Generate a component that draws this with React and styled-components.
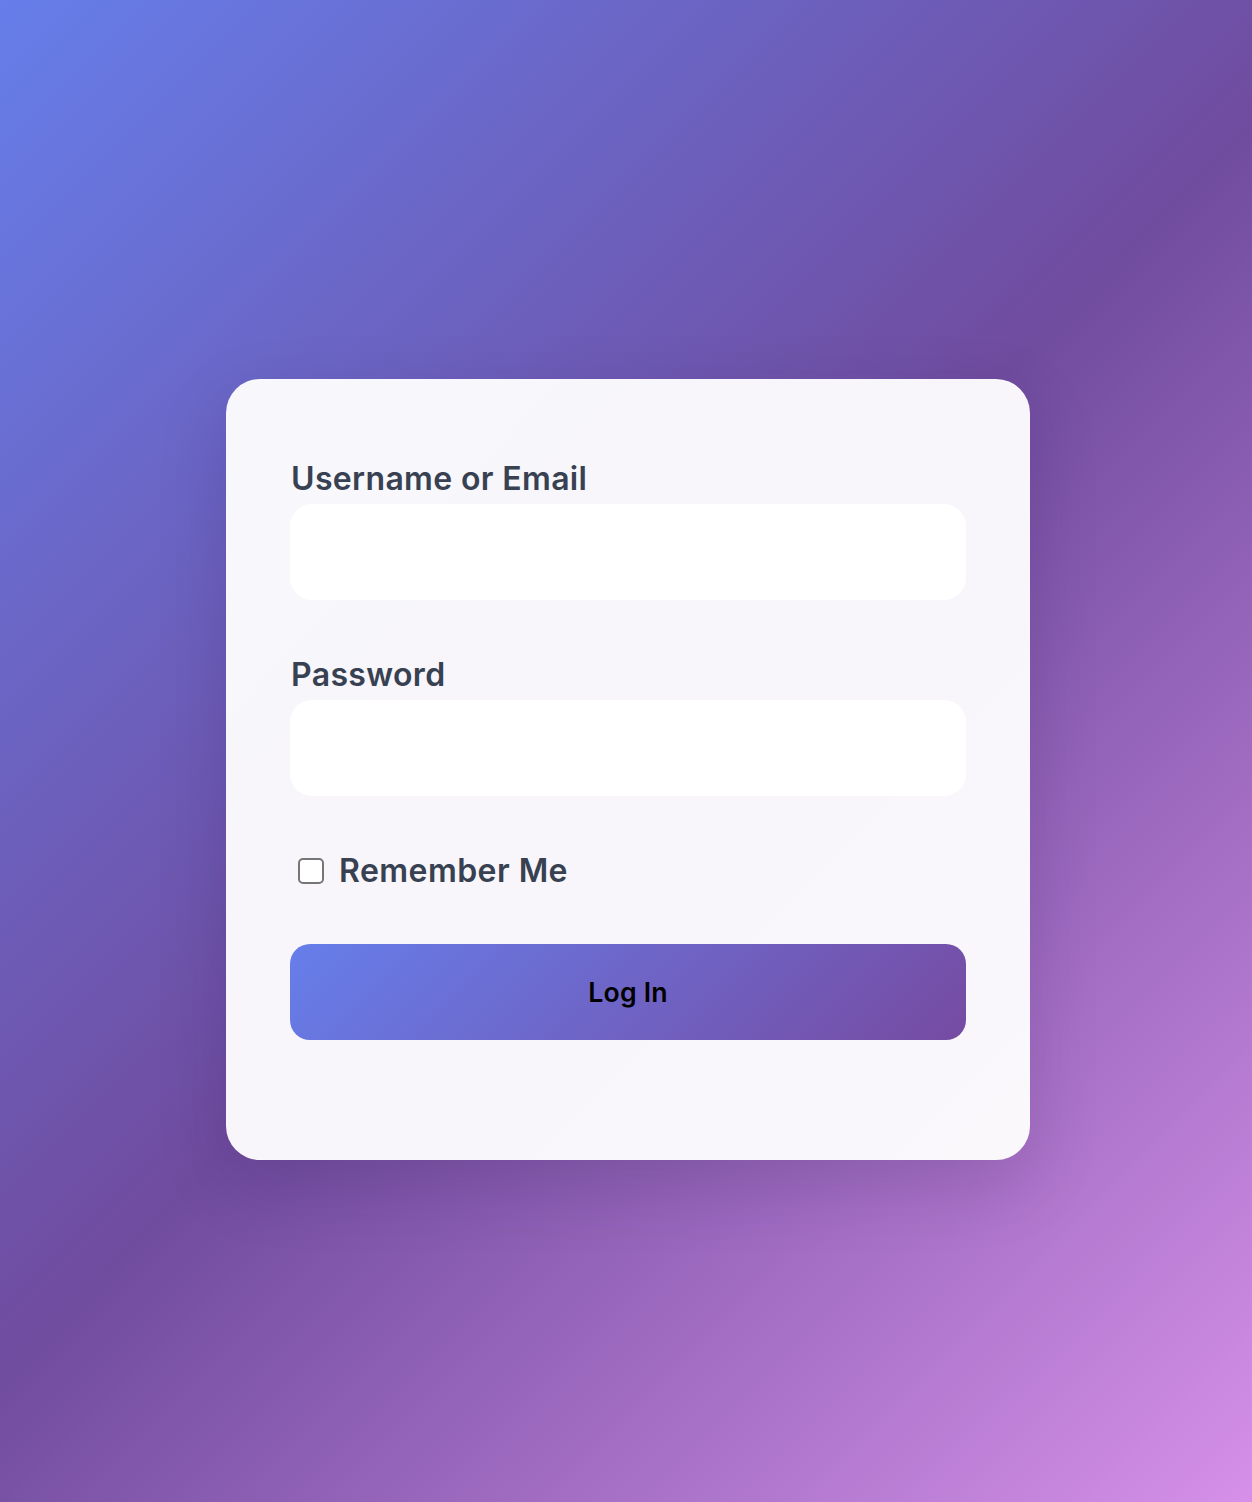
import React from "react";
import styled, { createGlobalStyle } from "styled-components";

const GlobalStyle = createGlobalStyle`
  * {
    box-sizing: border-box;
  }

  html,
  body {
    margin: 0;
    padding: 0;
  }

  body {
    font-family: Inter, "Noto Sans", "Liberation Sans", sans-serif;
  }
`;

function App() {
  return (
    <>
      <GlobalStyle />
      <StPage>
        <StCard>
          <StForm onSubmit={(e) => e.preventDefault()}>
            <StGroup>
              <StLabel htmlFor="user">Username or Email</StLabel>
              <StInput id="user" type="text" />
            </StGroup>

            <StGroup>
              <StLabel htmlFor="pass">Password</StLabel>
              <StInput id="pass" type="password" />
            </StGroup>

            <StRemember>
              <StCheck type="checkbox" />
              Remember Me
            </StRemember>

            <StButton type="submit">Log In</StButton>
          </StForm>
        </StCard>
      </StPage>
    </>
  );
}

export default App;

const StPage = styled.div`
  min-height: 100vh;
  padding: 37px 0 0 4px;
  display: flex;
  align-items: center;
  justify-content: center;
  background: linear-gradient(135deg, #667eea 0%, #704c9f 50%, #d690e9 100%);
`;

const StCard = styled.div`
  width: 804px;
  padding: 80px 64px 120px;
  border-radius: 34px;
  background: rgba(255, 255, 255, 0.95);
  box-shadow: 0 24px 70px rgba(30, 10, 60, 0.16);
`;

const StForm = styled.form`
  display: flex;
  flex-direction: column;
`;

const StGroup = styled.div`
  display: flex;
  flex-direction: column;
  margin-bottom: 55px;
`;

const StLabel = styled.label`
  font-size: 32px;
  line-height: 39px;
  font-weight: 600;
  letter-spacing: 0.35px;
  color: #374151;
  margin-bottom: 6px;
  padding-left: 1px;
`;

const StInput = styled.input`
  height: 96px;
  width: 100%;
  border: none;
  border-radius: 22px;
  background: #ffffff;
  padding: 0 24px;
  font-family: inherit;
  font-size: 28px;
  outline: none;
`;

const StRemember = styled.label`
  display: flex;
  align-items: center;
  gap: 15px;
  height: 39px;
  margin-bottom: 54px;
  font-size: 32px;
  line-height: 39px;
  font-weight: 600;
  letter-spacing: 0.45px;
  color: #374151;
`;

const StCheck = styled.input`
  appearance: none;
  width: 26px;
  height: 26px;
  margin: 0 0 0 8px;
  border: 2px solid #767676;
  border-radius: 5px;
  background: #ffffff;
`;

const StButton = styled.button`
  height: 96px;
  width: 100%;
  border: none;
  border-radius: 20px;
  background: linear-gradient(135deg, #667eea 0%, #764ba2 100%);
  color: #000000;
  font-family: inherit;
  font-size: 26.67px;
  font-weight: 600;
  letter-spacing: 0.2px;
  cursor: pointer;
`;
